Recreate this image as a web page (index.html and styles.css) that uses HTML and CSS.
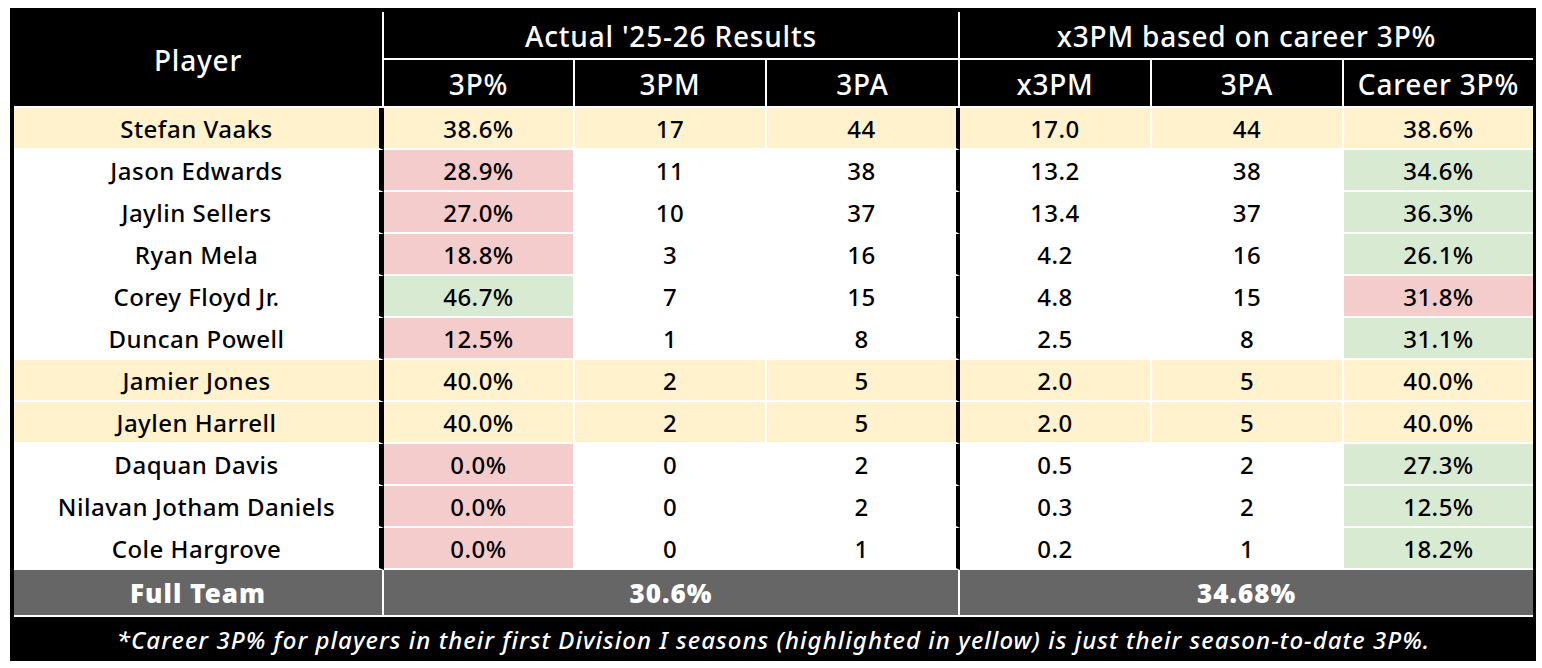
FILE: index.html
```html
<!DOCTYPE html>
<html>
<head>
<meta charset="utf-8">
<link rel="stylesheet" href="styles.css">
</head>
<body>
<div class="frame">
  <div class="sheet">
    <div class="hd player">Player</div>
    <div class="hd group grp-end">Actual '25-26 Results</div>
    <div class="hd group last">x3PM based on career 3P%</div>
    <div class="hd">3P%</div>
    <div class="hd">3PM</div>
    <div class="hd grp-end">3PA</div>
    <div class="hd">x3PM</div>
    <div class="hd">3PA</div>
    <div class="hd last">Career 3P%</div>

    <div class="c p y">Stefan Vaaks</div><div class="c y">38.6%</div><div class="c y">17</div><div class="c ge y">44</div><div class="c y">17.0</div><div class="c y">44</div><div class="c last y">38.6%</div>
    <div class="c p">Jason Edwards</div><div class="c r">28.9%</div><div class="c">11</div><div class="c ge">38</div><div class="c">13.2</div><div class="c">38</div><div class="c last g">34.6%</div>
    <div class="c p">Jaylin Sellers</div><div class="c r">27.0%</div><div class="c">10</div><div class="c ge">37</div><div class="c">13.4</div><div class="c">37</div><div class="c last g">36.3%</div>
    <div class="c p">Ryan Mela</div><div class="c r">18.8%</div><div class="c">3</div><div class="c ge">16</div><div class="c">4.2</div><div class="c">16</div><div class="c last g">26.1%</div>
    <div class="c p">Corey Floyd Jr.</div><div class="c g">46.7%</div><div class="c">7</div><div class="c ge">15</div><div class="c">4.8</div><div class="c">15</div><div class="c last r">31.8%</div>
    <div class="c p">Duncan Powell</div><div class="c r">12.5%</div><div class="c">1</div><div class="c ge">8</div><div class="c">2.5</div><div class="c">8</div><div class="c last g">31.1%</div>
    <div class="c p y">Jamier Jones</div><div class="c y">40.0%</div><div class="c y">2</div><div class="c ge y">5</div><div class="c y">2.0</div><div class="c y">5</div><div class="c last y">40.0%</div>
    <div class="c p y">Jaylen Harrell</div><div class="c y">40.0%</div><div class="c y">2</div><div class="c ge y">5</div><div class="c y">2.0</div><div class="c y">5</div><div class="c last y">40.0%</div>
    <div class="c p">Daquan Davis</div><div class="c r">0.0%</div><div class="c">0</div><div class="c ge">2</div><div class="c">0.5</div><div class="c">2</div><div class="c last g">27.3%</div>
    <div class="c p">Nilavan Jotham Daniels</div><div class="c r">0.0%</div><div class="c">0</div><div class="c ge">2</div><div class="c">0.3</div><div class="c">2</div><div class="c last g">12.5%</div>
    <div class="c p">Cole Hargrove</div><div class="c r">0.0%</div><div class="c">0</div><div class="c ge">1</div><div class="c">0.2</div><div class="c">1</div><div class="c last g">18.2%</div>

    <div class="tot">Full Team</div>
    <div class="tot span3">30.6%</div>
    <div class="tot span3 last">34.68%</div>
  </div>
  <div class="foot">*Career 3P% for players in their first Division I seasons (highlighted in yellow) is just their season-to-date 3P%.</div>
</div>
</body>
</html>
```
FILE: styles.css
```css
html, body {
  margin: 0;
  padding: 0;
  background: #ffffff;
}
body {
  font-family: "Noto Sans", "Open Sans", sans-serif;
}
.frame {
  margin: 8px 0 0 10px;
  width: 1526px;
  box-sizing: border-box;
  background: #000;
  padding: 4px 3px 0 4px;
}
.sheet {
  display: grid;
  grid-template-columns: 370px 191px 192px 193px 192px 192px 189px;
  grid-template-rows: 48px 48px repeat(11, 42px) 47px;
}
.sheet > div {
  box-sizing: border-box;
  display: flex;
  align-items: center;
  justify-content: center;
  white-space: nowrap;
}
.hd {
  background: #000;
  color: #fff;
  font-size: 28px;
  font-weight: 500;
  letter-spacing: 0.8px;
  border-right: 2px solid #fff;
  border-bottom: 2px solid #fff;
  padding-top: 2px;
}
.hd.player {
  grid-row: span 2;
}
.hd.group {
  grid-column: span 3;
}
.hd.last, .c.last, .tot.last {
  border-right: none;
}
.c {
  background: #fff;
  color: #000;
  font-size: 24px;
  font-weight: 500;
  letter-spacing: 0.5px;
  border-right: 2px solid #fff;
  border-bottom: 2px solid #fff;
}
.c.p {
  border-right: 5px solid #000;
}
.c.ge {
  border-right: 4px solid #000;
}
.c.y { background: #fff2cc; }
.c.r { background: #f4cccc; }
.c.g { background: #d9ead3; }
.tot {
  background: #666666;
  color: #fff;
  font-size: 26px;
  font-weight: 900;
  letter-spacing: 1px;
  border-right: 2px solid #fff;
  border-bottom: 2px solid #fff;
}
.tot.span3 {
  grid-column: span 3;
}
.foot {
  height: 44px;
  display: flex;
  align-items: center;
  justify-content: center;
  color: #fff;
  font-size: 24px;
  font-style: italic;
  font-weight: 500;
  letter-spacing: 1.05px;
}
```
